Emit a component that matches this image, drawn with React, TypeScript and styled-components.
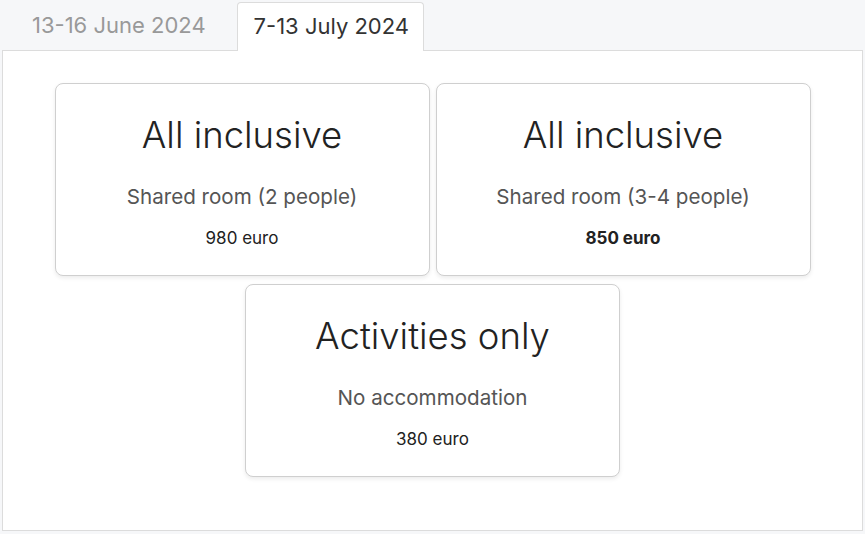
import styled, { createGlobalStyle } from 'styled-components'

const GlobalStyle = createGlobalStyle`
  html, body {
    margin: 0;
    padding: 0;
    background: #f6f7f9;
    font-family: Inter, "Noto Sans", "Liberation Sans", sans-serif;
  }
`

const Page = styled.div`
  padding: 0 2px;
`

const TabList = styled.div`
  display: flex;
  align-items: flex-end;
  height: 50px;
  padding-left: 13px;
  gap: 16px;
`

const Tab = styled.div<{ active?: boolean }>`
  height: 49px;
  box-sizing: border-box;
  padding: 0 14px 2px 16px;
  display: flex;
  align-items: center;
  font-size: 22px;
  color: ${p => (p.active ? '#333' : '#999')};
  background: ${p => (p.active ? '#fff' : 'transparent')};
  border: 1px solid ${p => (p.active ? '#dcdcdc' : 'transparent')};
  border-bottom: none;
  border-radius: 4px 4px 0 0;
  margin-bottom: ${p => (p.active ? '-1px' : '0')};
  position: relative;
`

const Panel = styled.div`
  background: #fff;
  border: 1px solid #dcdcdc;
  height: 481px;
  box-sizing: border-box;
  padding-top: 32px;
`

const Grid = styled.div`
  display: flex;
  flex-wrap: wrap;
  justify-content: center;
  column-gap: 6px;
  row-gap: 8px;
  width: 756px;
  margin: 0 auto;
`

const Card = styled.div`
  width: 375px;
  height: 193px;
  box-sizing: border-box;
  border: 1px solid #cfcfcf;
  border-radius: 8px;
  box-shadow: 0 2px 4px rgba(0, 0, 0, 0.08);
  background: #fff;
  display: flex;
  flex-direction: column;
  align-items: center;
  text-align: center;
`

const Title = styled.div`
  margin-top: 29px;
  font-size: 36.5px;
  font-weight: 300;
  line-height: 44px;
  color: #222;
`

const Subtitle = styled.div`
  margin-top: 27px;
  font-size: 20.6px;
  line-height: 26px;
  color: #555;
`

const Price = styled.div<{ bold?: boolean }>`
  margin-top: 18px;
  font-size: 17px;
  line-height: 20px;
  color: #222;
  font-weight: ${p => (p.bold ? 700 : 400)};
`

const plans = [
  { title: 'All inclusive', sub: 'Shared room (2 people)', price: '980 euro' },
  { title: 'All inclusive', sub: 'Shared room (3-4 people)', price: '850 euro', bold: true },
  { title: 'Activities only', sub: 'No accommodation', price: '380 euro' },
]

function App() {
  return (
    <>
      <GlobalStyle />
      <Page>
        <TabList>
          <Tab>13-16 June 2024</Tab>
          <Tab active>7-13 July 2024</Tab>
        </TabList>
        <Panel>
          <Grid>
            {plans.map((p, i) => (
              <Card key={i}>
                <Title>{p.title}</Title>
                <Subtitle>{p.sub}</Subtitle>
                <Price bold={p.bold}>{p.price}</Price>
              </Card>
            ))}
          </Grid>
        </Panel>
      </Page>
    </>
  )
}
export default App
